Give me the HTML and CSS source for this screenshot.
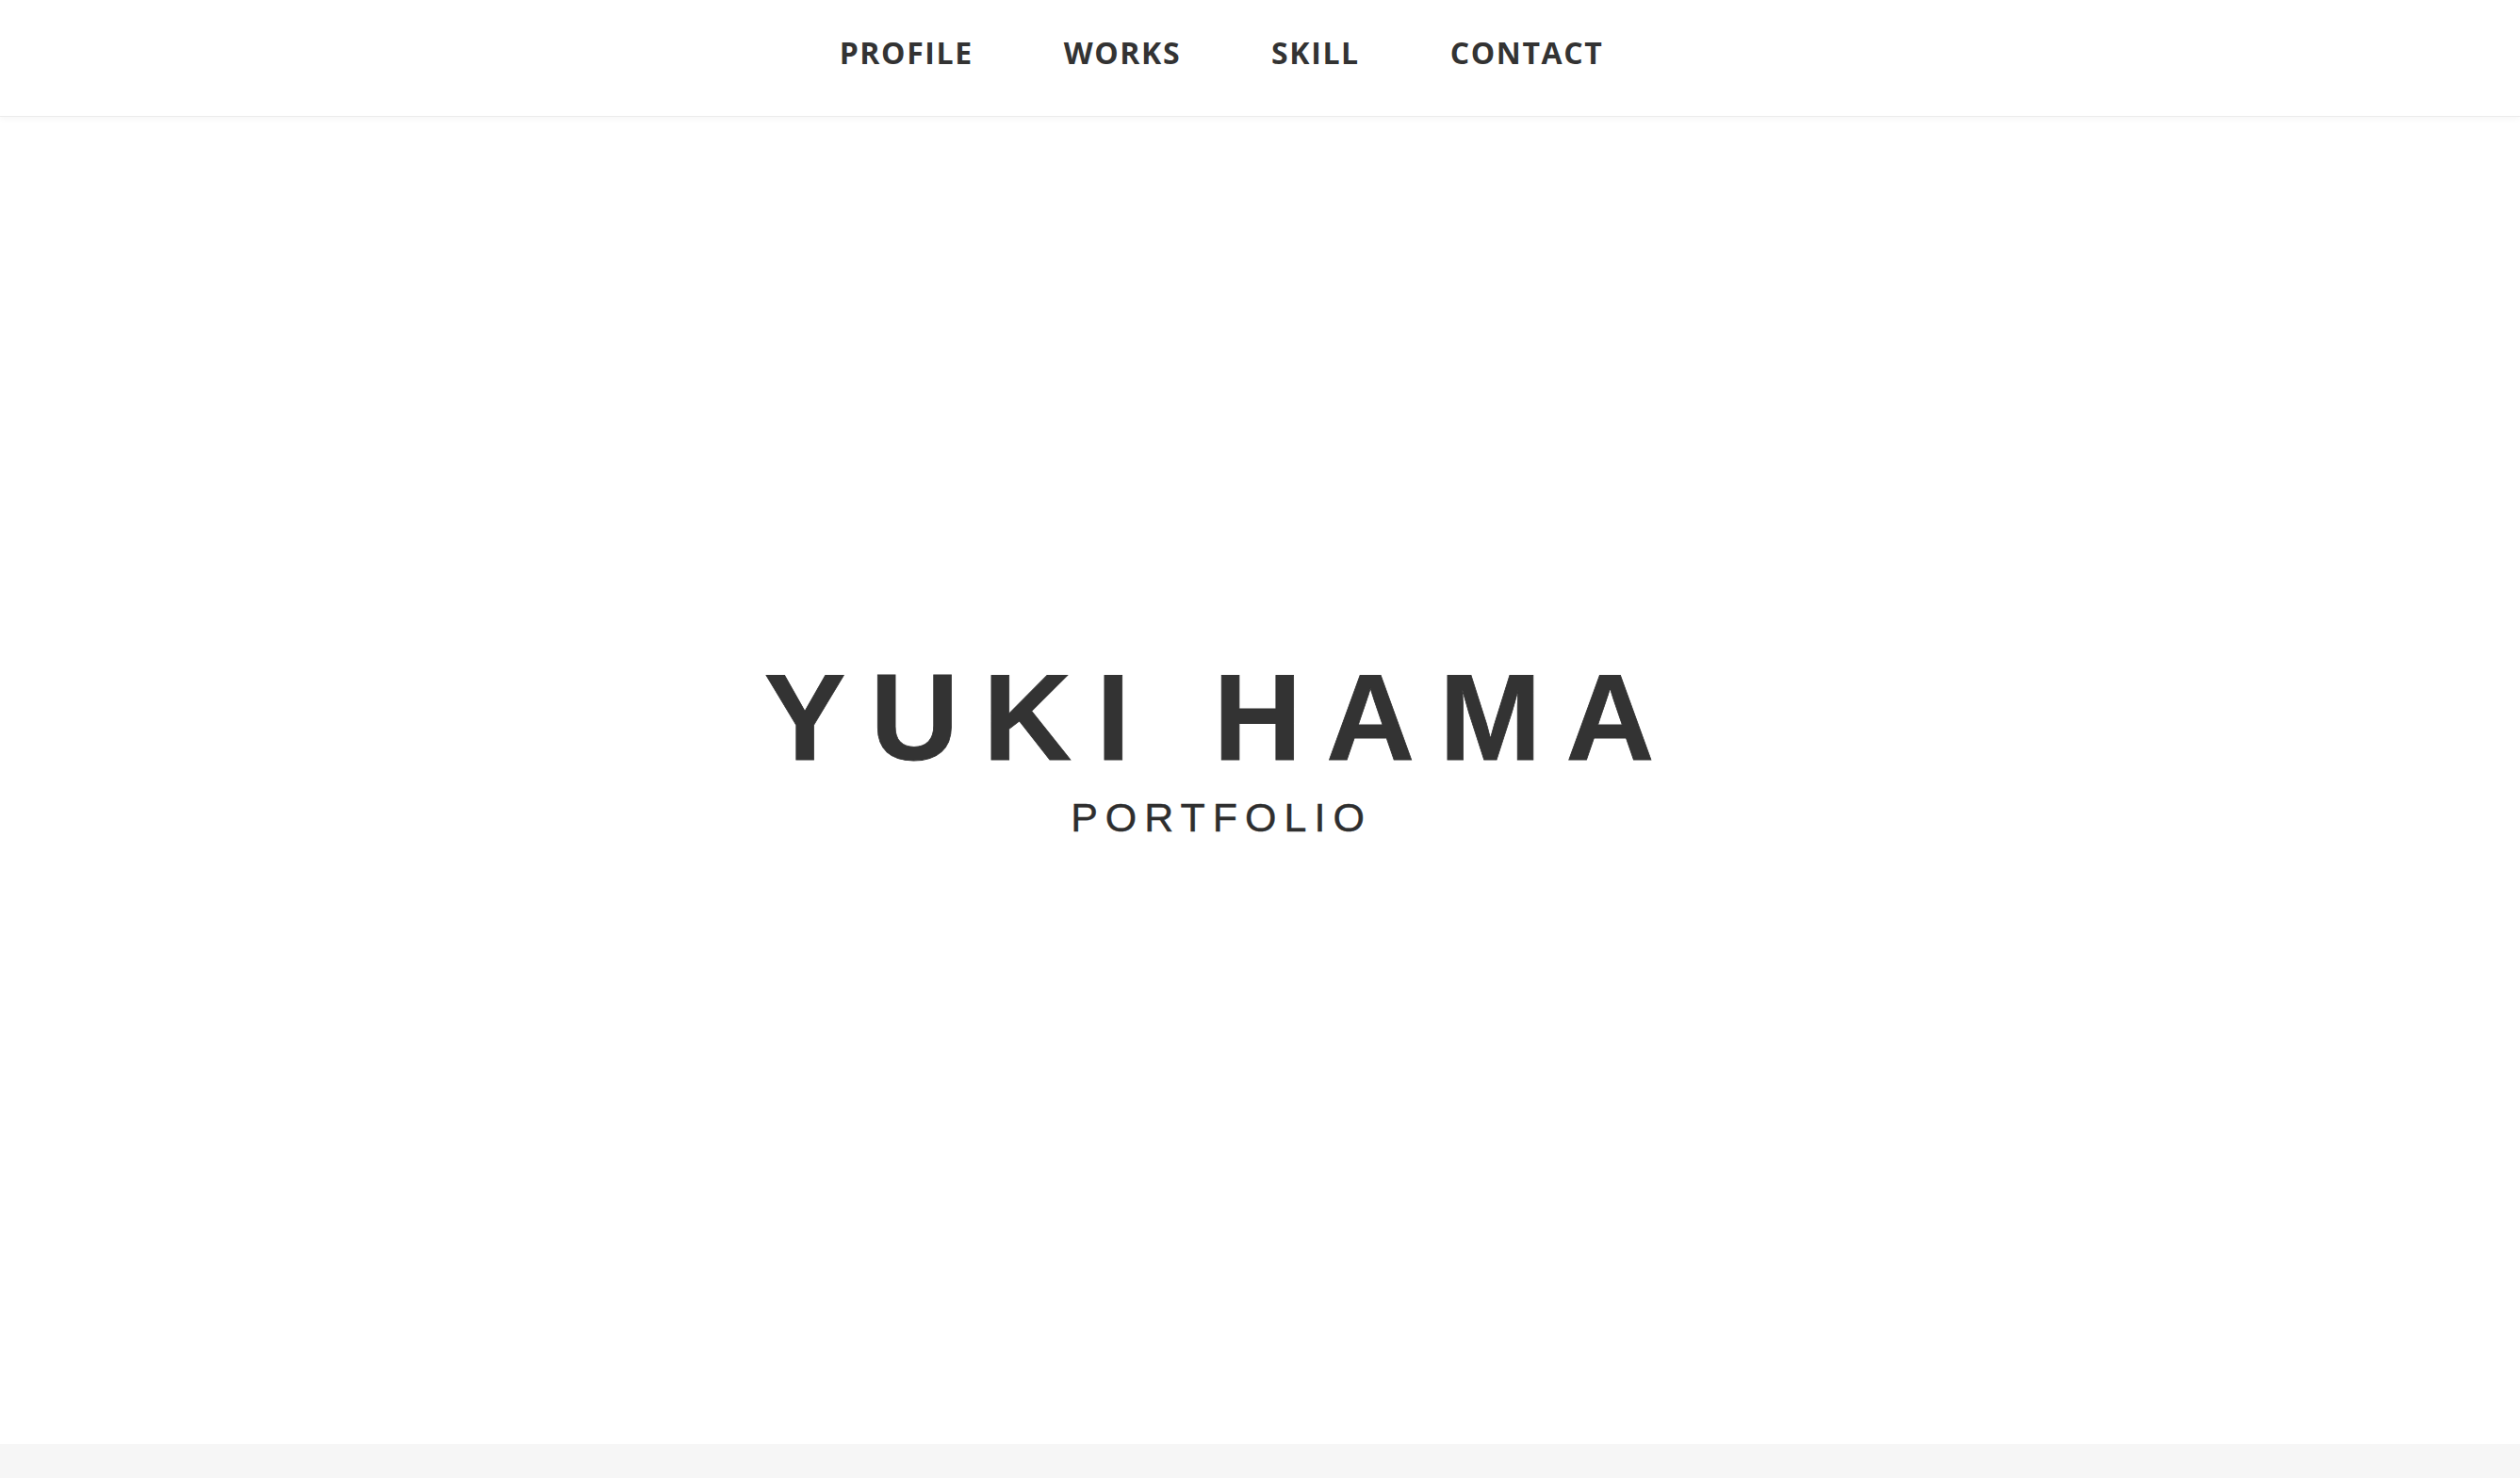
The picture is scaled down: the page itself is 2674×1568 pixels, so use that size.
FILE: index.html
```html
<!DOCTYPE html>
<html lang="ja">
<head>
<meta charset="utf-8">
<title>YUKI HAMA PORTFOLIO</title>
<link rel="stylesheet" href="styles.css">
</head>
<body>
<header class="site-header">
  <nav class="global-nav">
    <ul class="nav-list">
      <li class="nav-item"><a class="nav-link" href="#profile">PROFILE</a></li>
      <li class="nav-item"><a class="nav-link" href="#works">WORKS</a></li>
      <li class="nav-item"><a class="nav-link" href="#skill">SKILL</a></li>
      <li class="nav-item"><a class="nav-link" href="#contact">CONTACT</a></li>
    </ul>
  </nav>
</header>
<main>
  <section class="hero">
    <h1 class="hero-title">YUKI HAMA</h1>
    <p class="hero-sub">PORTFOLIO</p>
  </section>
  <section class="next-section" id="profile"></section>
</main>
</body>
</html>
```
FILE: styles.css
```css
html, body {
  margin: 0;
  padding: 0;
}
body {
  background: #ffffff;
  color: #333333;
  font-family: "Liberation Sans", Arial, sans-serif;
}
.site-header {
  height: 123px;
  background: #ffffff;
  border-bottom: 1px solid #ececec;
  box-shadow: 0 2px 6px rgba(0, 0, 0, 0.04);
  position: relative;
  z-index: 1;
}
.global-nav {
  padding-right: 82px;
  padding-top: 34px;
}
.nav-list {
  list-style: none;
  margin: 0;
  padding: 0;
  display: flex;
  justify-content: center;
}
.nav-item {
  padding: 0 48px;
}
.nav-link {
  font-family: "Open Sans", sans-serif;
  font-weight: 700;
  font-size: 32px;
  letter-spacing: 1.6px;
  color: #333333;
  text-decoration: none;
  line-height: normal;
}
.hero {
  height: 1408px;
  box-sizing: border-box;
  padding-right: 82px;
  padding-bottom: 72px;
  display: flex;
  flex-direction: column;
  align-items: center;
  justify-content: center;
  background: #ffffff;
}
.hero-title {
  margin: 0;
  font-family: "Liberation Sans", Arial, sans-serif;
  font-weight: 700;
  font-size: 130px;
  line-height: 1;
  letter-spacing: 26px;
  color: #333333;
  -webkit-text-stroke: 0.8px #333333;
}
.hero-sub {
  margin: 20px 0 0;
  font-family: "Liberation Sans", Arial, sans-serif;
  font-weight: 400;
  font-size: 43px;
  line-height: 1;
  letter-spacing: 8px;
  color: #2e2e2e;
  -webkit-text-stroke: 0.4px #2e2e2e;
}
.next-section {
  height: 400px;
  background: #f6f6f6;
}
```
